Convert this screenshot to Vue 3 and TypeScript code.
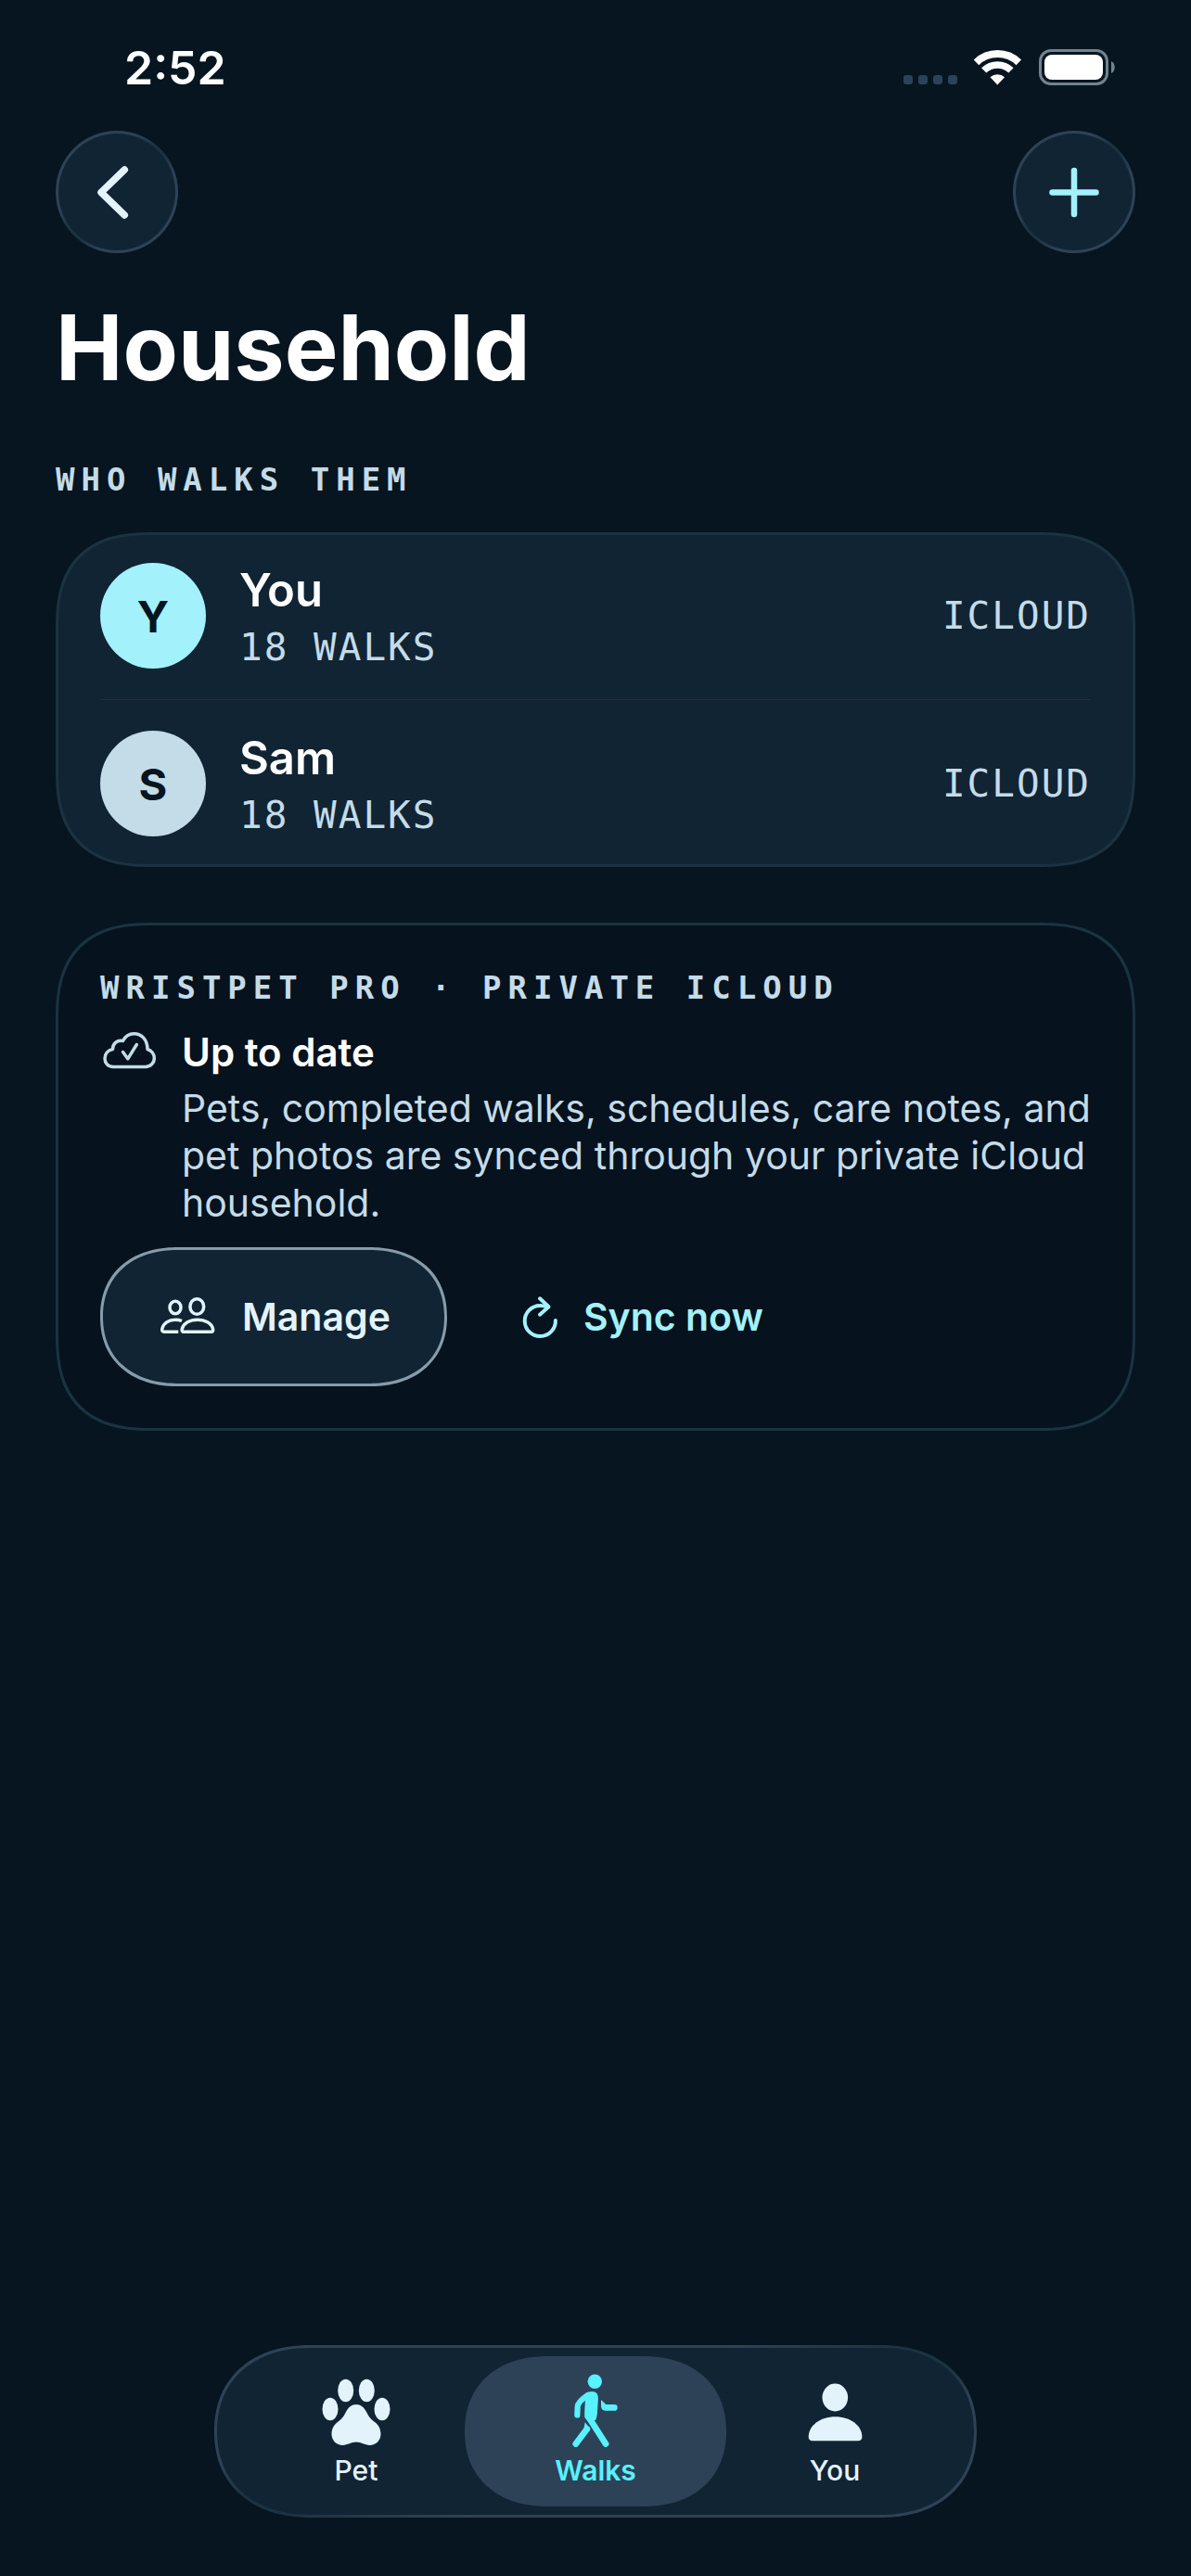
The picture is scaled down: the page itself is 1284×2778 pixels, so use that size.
<script setup lang="ts">
import { ref } from 'vue'

interface Walker {
  name: string
  walks: number
  source: string
  tone: 'aqua' | 'mist'
}

type TabId = 'pet' | 'walks' | 'you'

const walkers: Walker[] = [
  { name: 'You', walks: 18, source: 'ICLOUD', tone: 'aqua' },
  { name: 'Sam', walks: 18, source: 'ICLOUD', tone: 'mist' },
]

const tabs: { id: TabId; label: string }[] = [
  { id: 'pet', label: 'Pet' },
  { id: 'walks', label: 'Walks' },
  { id: 'you', label: 'You' },
]

const activeTab = ref<TabId>('walks')
</script>

<template>
  <div class="screen">
    <div class="status">
      <span class="time">2:52</span>
      <div class="indicators">
        <div class="dots"><i></i><i></i><i></i><i></i></div>
        <svg width="52" height="39" viewBox="0 0 52 39" fill="none" stroke="#fff" aria-hidden="true">
          <path d="M2.5 14.3A33 33 0 0 1 48.3 14.3" stroke-width="8" />
          <path d="M10.7 22.9A21 21 0 0 1 40 22.9" stroke-width="7.5" />
          <path d="M25.3 38.5L17.5 30.2A11.8 11.8 0 0 1 33.1 30.2Z" fill="#fff" stroke="none" />
        </svg>
        <svg width="82" height="39" viewBox="0 0 82 39" aria-hidden="true">
          <rect x="1.5" y="1.5" width="72" height="36" rx="11.5" fill="none" stroke="#71838f" stroke-width="3" />
          <rect x="6" y="6" width="63" height="27" rx="8" fill="#fff" />
          <path d="M78 13c5 2 5 11 0 13z" fill="#71838f" />
        </svg>
      </div>
    </div>

    <header class="toolbar">
      <button class="round" type="button" aria-label="Back">
        <svg width="126" height="126" viewBox="3 3 126 126" fill="none" stroke="#e3f3fc" stroke-width="7.5" stroke-linecap="round" stroke-linejoin="round">
          <path d="M74.3 42L49 66.5L74.3 91" />
        </svg>
      </button>
      <button class="round" type="button" aria-label="Add walker">
        <svg width="126" height="126" viewBox="3 3 126 126" fill="none" stroke="#a3f1fb" stroke-width="6.5" stroke-linecap="round">
          <path d="M66 43V90M42.5 66.5H89.5" />
        </svg>
      </button>
    </header>

    <main>
      <h1>Household</h1>
      <h2 class="label section">WHO WALKS THEM</h2>

      <ul class="card walkers">
        <li v-for="walker in walkers" :key="walker.name">
          <span class="avatar" :class="walker.tone">{{ walker.name.charAt(0) }}</span>
          <div class="who">
            <span class="name">{{ walker.name }}</span>
            <span class="meta">{{ walker.walks }} WALKS</span>
          </div>
          <span class="meta">{{ walker.source }}</span>
        </li>
      </ul>

      <section class="card sync">
        <h2 class="label">WRISTPET PRO · PRIVATE ICLOUD</h2>
        <div class="state">
          <svg width="63" height="50" viewBox="0 0 63 50" fill="none" stroke="#c4dbe8" stroke-width="3.5" stroke-linecap="round" stroke-linejoin="round" aria-hidden="true">
            <path d="M14 40.5C8.5 40.5 5 36.5 5 31.5C5 26.5 8.5 22.5 13.5 21.5C13.5 15.5 18.5 11 24.5 12.5C27 7.5 31 4.7 36.5 4.7C44.5 4.7 50.8 11 51 21.5C55.5 23 58.3 27 58.3 31.3C58.3 36.5 54 40.5 49 40.5Z" />
            <path d="M24.5 24.5L29.8 31.8L39.3 16.5" />
          </svg>
          <div>
            <h3>Up to date</h3>
            <p>Pets, completed walks, schedules, care notes, and pet photos are synced through your private iCloud household.</p>
          </div>
        </div>
        <div class="actions">
          <button class="manage" type="button">
            <svg width="62" height="60" viewBox="0 0 62 60" fill="none" stroke="#e3f3fc" stroke-width="3.5" aria-hidden="true">
              <ellipse cx="18" cy="20" rx="6" ry="6.7" />
              <ellipse cx="41.3" cy="19" rx="7.4" ry="8.3" />
              <path d="M27 46.3H56.5C58.5 46.3 59 44.8 58.5 43C57 37 50 33.2 42 33.2C33.5 33.2 27 37 25.3 43C24.8 45 25.5 46.3 27 46.3Z" />
              <path d="M21.3 46.3H6C4 46.3 3.5 45 3.8 43C5 37 11 33.2 18 33.2C20.5 33.2 23 33.6 25 34.5" />
            </svg>
            Manage
          </button>
          <button class="refresh" type="button">
            <svg width="42" height="60" viewBox="0 0 42 60" fill="none" stroke="#a3f1fb" stroke-width="4" stroke-linecap="round" stroke-linejoin="round" aria-hidden="true">
              <path d="M36.9 34A16.6 16.6 0 1 1 20.3 17.9Q24 17.9 28 19.3" />
              <path d="M20 10.3L29.5 19.3L20 27.7" />
            </svg>
            Sync now
          </button>
        </div>
      </section>
    </main>

    <nav class="tabs" aria-label="Main">
      <button
        v-for="tab in tabs"
        :key="tab.id"
        type="button"
        class="tab"
        :class="{ active: tab.id === activeTab }"
        :aria-current="tab.id === activeTab ? 'page' : undefined"
        @click="activeTab = tab.id"
      >
        <svg width="80" height="80" viewBox="0 0 80 80" fill="currentColor" aria-hidden="true">
          <template v-if="tab.id === 'pet'">
            <ellipse cx="12" cy="39" rx="8.5" ry="12.2" />
            <ellipse cx="28.7" cy="19" rx="8.5" ry="12.2" />
            <ellipse cx="51.3" cy="19" rx="8.5" ry="12.2" />
            <ellipse cx="68" cy="39" rx="8.5" ry="12.2" />
            <path d="M40 34C45 34 48.5 37 51 42C54 48 56.5 50.5 60 53C64.5 56.5 66.5 60.5 66.5 66C66.5 73 61 78 54.5 78C49.5 78 45 74.6 40 74.6C35 74.6 30.5 78 25.5 78C19 78 13.5 73 13.5 66C13.5 60.5 15.5 56.5 20 53C23.5 50.5 26 48 29 42C31.5 37 35 34 40 34Z" />
          </template>
          <template v-else-if="tab.id === 'walks'">
            <circle cx="39.3" cy="9.3" r="7.7" />
            <path d="M29 22.5Q35.3 18.2 41 21.5Q43.2 24 42.8 29.3L41.8 45L40.5 50.5L33 53L28.3 48Q28 43 28.7 34Z" />
            <path d="M46 29L51.3 34H60.3A3.4 3.4 0 0 1 60.3 40.8H50.5Q46 40.2 46 35.8Z" />
            <path d="M28.7 53.3L34.2 60L33.2 63.2L27.6 59.5Z" />
            <g fill="none" stroke="currentColor" stroke-linecap="round" stroke-linejoin="round">
              <path d="M31.5 24Q21 31.5 20.7 36L20.3 45.5" stroke-width="6.2" />
              <path d="M32.5 47.5L51 76.5" stroke-width="6.8" />
              <path d="M30.8 60.5L18.8 76.5" stroke-width="6.8" />
            </g>
          </template>
          <template v-else>
            <ellipse cx="40.3" cy="26.5" rx="13.8" ry="15" />
            <path d="M16 73.3C13 73.3 11.7 71.5 11.7 69C11.7 57 24 47.3 40.5 47.3C57 47.3 69.4 57 69.4 69C69.4 71.5 68 73.3 65 73.3Z" />
          </template>
        </svg>
        {{ tab.label }}
      </button>
    </nav>
  </div>
</template>

<style>
body {
  margin: 0;
  background: #06151f;
}
</style>

<style scoped>
.screen {
  --ink: #06151f;
  --panel: #112433;
  --raised: #2e4257;
  --line: #1b3341;
  --muted: #c4dbe8;
  --ice: #e3f3fc;
  --aqua: #a3f1fb;
  box-sizing: border-box;
  min-height: 100vh;
  display: flex;
  flex-direction: column;
  padding: 0 60px 63px;
  background: var(--ink);
  color: #fff;
  font-family: Inter, "Liberation Sans", sans-serif;
}

button {
  font: inherit;
  color: inherit;
  background: none;
  border: 0;
  padding: 0;
  cursor: pointer;
}

svg {
  display: block;
  flex: none;
}

h1,
h2,
h3,
p,
ul {
  margin: 0;
  padding: 0;
}

.status {
  height: 145px;
  margin-bottom: -4px;
  display: flex;
  align-items: center;
  justify-content: space-between;
  padding: 0 22px 0 74px;
}

.time {
  font-size: 50px;
  font-weight: 600;
}

.indicators {
  display: flex;
  align-items: flex-end;
  gap: 18px;
}

.dots {
  display: flex;
  gap: 6px;
  padding-bottom: 1px;
}

.dots i {
  width: 10px;
  height: 10px;
  border-radius: 3px;
  background: var(--raised);
}

.toolbar {
  display: flex;
  justify-content: space-between;
}

/* Glass edge: bright along the main diagonal, dim at the opposite corners */
.round,
.tabs {
  border: 3px solid transparent;
  background:
    linear-gradient(var(--panel), var(--panel)) padding-box,
    linear-gradient(to bottom right, var(--raised) 34%, var(--line) 46%, var(--line) 54%, var(--raised) 66%) border-box;
}

.round {
  box-sizing: border-box;
  width: 132px;
  height: 132px;
  border-radius: 50%;
  display: grid;
  place-items: center;
}

h1 {
  margin-top: 42px;
  font-size: 97px;
  line-height: 120px;
  font-weight: 700;
}

.label {
  font-family: "DejaVu Sans Mono", monospace;
  font-size: 34px;
  line-height: 44px;
  font-weight: 700;
  letter-spacing: 7px;
  color: var(--muted);
}

.section {
  margin: 60px 0 35px;
}

.card {
  border: 3px solid var(--line);
  border-radius: 84px;
}

.walkers {
  list-style: none;
  padding: 0 45px;
  background: var(--panel);
}

.walkers li {
  display: flex;
  align-items: center;
  gap: 36px;
  padding: 33px 0;
}

.walkers li:first-child {
  padding-top: 30px;
}

.walkers li:last-child {
  padding-bottom: 30px;
}

.walkers li + li {
  border-top: 1px solid var(--line);
}

.avatar {
  flex: none;
  width: 114px;
  height: 114px;
  border-radius: 50%;
  display: grid;
  place-items: center;
  color: var(--ink);
  font-size: 47px;
  font-weight: 700;
}

.avatar.aqua {
  background: var(--aqua);
}

.avatar.mist {
  background: var(--muted);
}

.who {
  flex: 1;
  display: flex;
  flex-direction: column;
  margin: -4px 0;
}

.name {
  font-size: 49px;
  line-height: 68px;
  font-weight: 600;
}

.meta {
  font-family: "DejaVu Sans Mono", monospace;
  font-size: 41px;
  line-height: 54px;
  letter-spacing: 2px;
  color: var(--muted);
}

.sync {
  margin-top: 60px;
  padding: 45px;
  background: #06121d;
}

.state {
  display: flex;
  gap: 25px;
  margin-top: 23px;
}

.state h3 {
  font-size: 42px;
  line-height: 50px;
  font-weight: 600;
}

.state p {
  margin-top: 10px;
  font-size: 41px;
  line-height: 51px;
  color: var(--muted);
}

.actions {
  display: flex;
  gap: 24px;
  margin-top: 22px;
  font-size: 41px;
  font-weight: 600;
}

.actions button {
  display: flex;
  align-items: center;
  height: 150px;
}

.manage {
  box-sizing: border-box;
  gap: 28px;
  padding: 0 58px 0 60px;
  border: 3px solid #869cab;
  border-radius: 75px;
  background: var(--panel);
  color: var(--ice);
}

.refresh {
  gap: 25px;
  padding: 0 56px;
  color: var(--aqua);
}

.tabs {
  align-self: center;
  margin-top: auto;
  display: flex;
  padding: 9px 21px;
  border-radius: 93px;
}

.tab {
  width: 258px;
  height: 162px;
  display: flex;
  flex-direction: column;
  align-items: center;
  gap: 7px;
  padding-top: 18px;
  box-sizing: border-box;
  font-size: 30px;
  line-height: 36px;
  font-weight: 500;
  color: var(--ice);
}

.tab.active {
  width: 282px;
  margin: 0 -12px;
  border-radius: 81px;
  background: var(--raised);
  color: #58f1ff;
  font-weight: 600;
}

@supports (corner-shape: squircle) {
  .card {
    border-radius: 104px;
    corner-shape: superellipse(1.35);
  }

  .manage {
    border-radius: 84px / 75px;
    corner-shape: superellipse(1.15);
  }

  .tabs {
    border-radius: 104px / 93px;
    corner-shape: superellipse(1.15);
  }

  .tab.active {
    border-radius: 90px / 81px;
    corner-shape: superellipse(1.15);
  }
}
</style>
